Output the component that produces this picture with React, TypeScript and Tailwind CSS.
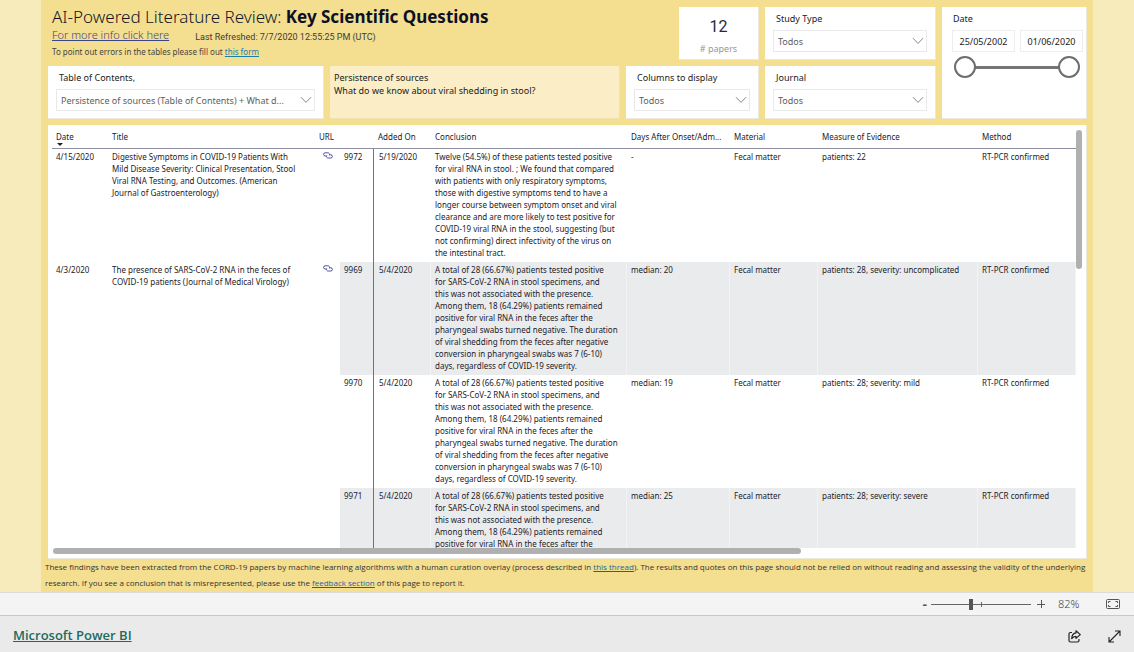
import type { ReactNode } from 'react';
import clsx from 'clsx';

interface Finding {
  id: string;
  added: string;
  conclusion: string[];
  days: string;
  evidence: string;
}

interface Paper {
  date: string;
  title: string[];
  findings: Finding[];
}

const FECES_CONCLUSION = [
  'A total of 28 (66.67%) patients tested positive',
  'for SARS-CoV-2 RNA in stool specimens, and',
  'this was not associated with the presence.',
  'Among them, 18 (64.29%) patients remained',
  'positive for viral RNA in the feces after the',
  'pharyngeal swabs turned negative. The duration',
  'of viral shedding from the feces after negative',
  'conversion in pharyngeal swabs was 7 (6-10)',
  'days, regardless of COVID-19 severity.',
];

const papers: Paper[] = [
  {
    date: '4/15/2020',
    title: [
      'Digestive Symptoms in COVID-19 Patients With',
      'Mild Disease Severity: Clinical Presentation, Stool',
      'Viral RNA Testing, and Outcomes. (American',
      'Journal of Gastroenterology)',
    ],
    findings: [
      {
        id: '9972',
        added: '5/19/2020',
        conclusion: [
          'Twelve (54.5%) of these patients tested positive',
          'for viral RNA in stool. ; We found that compared',
          'with patients with only respiratory symptoms,',
          'those with digestive symptoms tend to have a',
          'longer course between symptom onset and viral',
          'clearance and are more likely to test positive for',
          'COVID-19 viral RNA in the stool, suggesting (but',
          'not confirming) direct infectivity of the virus on',
          'the intestinal tract.',
        ],
        days: '-',
        evidence: 'patients: 22',
      },
    ],
  },
  {
    date: '4/3/2020',
    title: ['The presence of SARS-CoV-2 RNA in the feces of', 'COVID-19 patients (Journal of Medical Virology)'],
    findings: [
      { id: '9969', added: '5/4/2020', conclusion: FECES_CONCLUSION, days: 'median: 20', evidence: 'patients: 28, severity: uncomplicated' },
      { id: '9970', added: '5/4/2020', conclusion: FECES_CONCLUSION, days: 'median: 19', evidence: 'patients: 28; severity: mild' },
      { id: '9971', added: '5/4/2020', conclusion: FECES_CONCLUSION, days: 'median: 25', evidence: 'patients: 28; severity: severe' },
    ],
  },
];

function Card({ className, children }: { className?: string; children: ReactNode }) {
  return <section className={clsx('border-r border-b border-[#ece8da] bg-white', className)}>{children}</section>;
}

function Slicer({ id, label, value, className }: { id: string; label: string; value: string; className?: string }) {
  return (
    <Card className={clsx('px-2', className)}>
      <label htmlFor={id} className="block h-[23px] pt-1 pl-[3px] text-[9px] leading-4 text-[#222]">
        {label}
      </label>
      <div className="grid items-center">
        <select
          id={id}
          defaultValue={value}
          className="col-start-1 row-start-1 h-[22px] w-full appearance-none rounded-none border border-[#e9e9e9] bg-white pt-0.5 pr-5 pl-1 text-[9px] text-[#605e5c] outline-none"
        >
          <option>{value}</option>
        </select>
        <svg viewBox="0 0 12 8" className="pointer-events-none col-start-1 row-start-1 mr-[3px] h-2 w-3 justify-self-end" fill="none" stroke="#888" strokeWidth="1">
          <path d="M1 1.2 6 6.4l5-5.2" />
        </svg>
      </div>
    </Card>
  );
}

const thumbClasses =
  'pointer-events-none col-start-1 row-start-1 m-0 h-[22px] w-full appearance-none bg-transparent outline-none [&::-webkit-slider-thumb]:pointer-events-auto [&::-webkit-slider-thumb]:h-[22px] [&::-webkit-slider-thumb]:w-[22px] [&::-webkit-slider-thumb]:appearance-none [&::-webkit-slider-thumb]:rounded-full [&::-webkit-slider-thumb]:border-2 [&::-webkit-slider-thumb]:border-[#6e6e6e] [&::-webkit-slider-thumb]:bg-white';

function DateRange() {
  return (
    <Card className="row-span-2 pr-1 pl-2.5">
      <h2 className="h-[23px] pt-1 pl-px text-[9px] leading-4 text-[#222]">Date</h2>
      <div className="flex gap-[5px]">
        <input aria-label="Start date" defaultValue="25/05/2002" className="h-[22px] w-[63px] border border-[#eee] text-center text-[9px] text-[#222] outline-none" />
        <input aria-label="End date" defaultValue="01/06/2020" className="h-[22px] w-[63px] border border-[#eee] text-center text-[9px] text-[#222] outline-none" />
      </div>
      <div className="mt-1 ml-0.5 grid w-[126px] items-center">
        <div className="col-start-1 row-start-1 mx-2 h-[3px] bg-[#757575]" />
        <input type="range" aria-label="From" min={0} max={100} defaultValue={0} className={thumbClasses} />
        <input type="range" aria-label="To" min={0} max={100} defaultValue={100} className={thumbClasses} />
      </div>
    </Card>
  );
}

function Header() {
  return (
    <header className="col-span-2 pl-1">
      <h1 className="text-[17px] leading-5 font-light whitespace-nowrap text-[#101828]">
        AI-Powered Literature Review: <span className="font-bold text-[#0b1026]">Key Scientific Questions</span>
      </h1>
      <div className="flex items-center gap-[26px]">
        <a href="#info" className="text-[11px] leading-4 font-light text-[#3d4585] underline">
          For more info click here
        </a>
        <span className="pt-1 font-[Roboto] text-[9px] leading-3 text-[#3c3c3c]">Last Refreshed: 7/7/2020 12:55:25 PM (UTC)</span>
      </div>
      <p className="text-[8px] leading-[17px] text-[#444]">
        To point out errors in the tables please fill out{' '}
        <a href="#form" className="text-[#1a80a8] underline">
          this form
        </a>
      </p>
    </header>
  );
}

function LinkIcon() {
  return (
    <svg viewBox="0 0 10 7" className="h-[7px] w-2.5" fill="none" stroke="#4a5298" strokeWidth="1">
      <path d="M3.800 4H2.200a1.600 1.600 0 0 1 0-3.200h2.600a1.600 1.600 0 0 1 1.500 2.400" />
      <path d="M6 2.800h1.800a1.600 1.600 0 0 1 0 3.200H5.200a1.600 1.600 0 0 1-1.500-2.400" />
    </svg>
  );
}

function FindingsTable() {
  const rule = 'border-b border-b-[#8f8fa3]';
  let row = 0;
  return (
    <table className="w-full table-fixed border-separate border-spacing-0 text-left text-[8px] leading-3 text-[#1b1b2b]">
      <colgroup>
        <col className="w-14" />
        <col className="w-[207px]" />
        <col className="w-[25px]" />
        <col className="w-[34px]" />
        <col className="w-[57px]" />
        <col className="w-[196px]" />
        <col className="w-[103px]" />
        <col className="w-[88px]" />
        <col className="w-[160px]" />
        <col />
      </colgroup>
      <thead>
        <tr className="h-[19px] align-top whitespace-nowrap [&>th]:px-1 [&>th]:pt-px [&>th]:font-normal">
          <th className={rule}>
            Date
            <svg viewBox="0 0 6 3" className="ml-px h-[3px] w-1.5" fill="#222">
              <path d="M0 0h6L3 3z" />
            </svg>
          </th>
          <th className={rule}>Title</th>
          <th className={rule}>URL</th>
          <th className={rule}></th>
          <th className={rule}>Added On</th>
          <th className={rule}>Conclusion</th>
          <th className={rule}>Days After Onset/Adm...</th>
          <th className={rule}>Material</th>
          <th className={rule}>Measure of Evidence</th>
          <th className={rule}>Method</th>
        </tr>
      </thead>
      <tbody>
        {papers.map((paper) =>
          paper.findings.map((f, i) => {
            const band = row++ % 2 === 1 ? 'bg-[#eaebed] border-r border-r-[#f2f3f4]' : 'border-r border-r-transparent';
            return (
              <tr key={f.id} className="align-top whitespace-nowrap [&>td]:px-1 [&>td]:pt-0.5 [&>td]:pb-[3px]">
                {i === 0 && (
                  <>
                    <td rowSpan={paper.findings.length}>{paper.date}</td>
                    <td rowSpan={paper.findings.length} className="whitespace-pre-line">
                      {paper.title.join('\n')}
                    </td>
                    <td rowSpan={paper.findings.length}>
                      <a href={`#${f.id}`} aria-label="Open paper" className="flex justify-center pt-px">
                        <LinkIcon />
                      </a>
                    </td>
                  </>
                )}
                <td className={clsx(band, 'border-r-[#6f7080]!')}>{f.id}</td>
                <td className={clsx(band, 'pl-[5px]!')}>{f.added}</td>
                <td className={clsx(band, 'whitespace-pre')}>{f.conclusion.join('\n')}</td>
                <td className={band}>{f.days}</td>
                <td className={band}>Fecal matter</td>
                <td className={band}>{f.evidence}</td>
                <td className={band}>RT-PCR confirmed</td>
              </tr>
            );
          }),
        )}
      </tbody>
    </table>
  );
}

function ZoomBar() {
  return (
    <div className="flex h-[23px] items-center justify-end border-t border-[#dcdcdc] bg-[#f4f4f4] pr-3.5 text-[#555]">
      <button aria-label="Zoom out" className="mr-1 text-sm leading-4 font-semibold">
        -
      </button>
      <div className="grid w-[100px] items-center">
        <div className="col-start-1 row-start-1 h-px bg-[#666]" />
        <div className="col-start-1 row-start-1 ml-[50px] h-[5px] w-px bg-[#666]" />
        <input
          type="range"
          aria-label="Zoom"
          min={0}
          max={100}
          defaultValue={40}
          className="col-start-1 row-start-1 m-0 h-3 w-full appearance-none bg-transparent outline-none [&::-webkit-slider-thumb]:h-[11px] [&::-webkit-slider-thumb]:w-1 [&::-webkit-slider-thumb]:appearance-none [&::-webkit-slider-thumb]:bg-[#555]"
        />
      </div>
      <button aria-label="Zoom in" className="ml-1.5">
        <svg viewBox="0 0 8 8" className="h-2 w-2" stroke="#555" strokeWidth="1">
          <path d="M0 4.5h8M4.5 0v8" />
        </svg>
      </button>
      <span className="ml-[13px] w-6 text-[11px] leading-4 font-light text-[#444]">82%</span>
      <button aria-label="Fit to page" className="ml-6">
        <svg viewBox="0 0 14 10" className="h-2.5 w-3.5" fill="none" stroke="#555" strokeWidth="1">
          <rect x=".5" y=".5" width="13" height="9" rx="1" />
          <path d="M4.500 2.500h-2V4M2.500 6v1.500h2M9.500 2.500h2V4M11.500 6v1.500h-2" />
        </svg>
      </button>
    </div>
  );
}

export default function App() {
  return (
    <div className="flex h-screen flex-col overflow-hidden font-['Noto_Sans','Open_Sans',sans-serif]">
      <main className="flex min-h-0 flex-1 flex-col bg-[#f7ebbb] px-[41px]">
        <div className="flex min-h-0 flex-1 flex-col bg-[#f4de8f] pt-[7px] pr-1.5 pl-[7px]">
          <div className="grid grid-cols-[276px_1fr_133px_171px_145px] grid-rows-[53px_53px] gap-1.5">
            <Header />
            <Card className="flex w-20 flex-col items-center justify-self-end pt-2">
              <span className="font-[Roboto] text-base leading-6 text-[#252a48]">12</span>
              <span className="pt-0.5 text-[9px] leading-4 text-[#999]"># papers</span>
            </Card>
            <Slicer id="study" label="Study Type" value="Todos" />
            <DateRange />
            <Slicer id="contents" label="Table of Contents," value="Persistence of sources (Table of Contents) + What d..." />
            <div className="border-r border-b border-[#f1e3b0] bg-[#fbeec7] px-1 pt-[5px] text-[9px] leading-[13px] text-[#222]">
              <p>Persistence of sources</p>
              <p>What do we know about viral shedding in stool?</p>
            </div>
            <Slicer id="columns" label="Columns to display" value="Todos" />
            <Slicer id="journal" label="Journal" value="Todos" />
          </div>

          <Card className="mt-1.5 grid min-h-0 flex-1 grid-cols-[1fr_6px] grid-rows-[1fr_6px] pt-[5px] pr-1 pb-1 pl-1">
            <div className="min-h-0 overflow-hidden">
              <FindingsTable />
            </div>
            <div className="h-1/3 rounded-full bg-[#b0b0b0]" />
            <div className="ml-px w-[73%] rounded-full bg-[#b0b0b0]" />
          </Card>

          <div className="-ml-[3px] pb-px font-['Open_Sans'] text-[8px] leading-4 whitespace-nowrap text-[#333]">
            <p>
              These findings have been extracted from the CORD-19 papers by machine learning algorithms with a human curation overlay (process described in{' '}
              <a href="#thread" className="text-[#1a62a8] underline">
                this thread
              </a>
              ). The results and quotes on this page should not be relied on without reading and assessing the validity of the underlying
            </p>
            <p>
              research. If you see a conclusion that is misrepresented, please use the{' '}
              <a href="#feedback" className="text-[#1a62a8] underline">
                feedback section
              </a>{' '}
              of this page to report it.
            </p>
          </div>
        </div>
      </main>

      <ZoomBar />

      <footer className="flex h-[37px] items-center justify-between border-t border-[#c8c8c8] bg-[#eaeaea] pt-1 pr-[13px] pl-[13px]">
        <a href="#powerbi" className="font-['Open_Sans'] text-[13px] font-semibold text-[#1c6b5f] underline">
          Microsoft Power BI
        </a>
        <div className="flex items-center gap-[27px]">
          <button aria-label="Share">
            <svg viewBox="0 0 13 13" className="h-[13px] w-[13px]" fill="none" stroke="#222" strokeWidth="1.2" strokeLinejoin="round">
              <path d="M4 2.500H2.500A1.500 1.500 0 0 0 1 4v6.500A1.500 1.500 0 0 0 2.500 12h7A1.500 1.500 0 0 0 11 10.500V9" />
              <path d="M8 .8 12.300 4.600 8 8.400V6.300C6 6.300 4.700 7 3.700 8.600 3.900 5.200 5.500 3.100 8 2.900z" />
            </svg>
          </button>
          <button aria-label="Full screen">
            <svg viewBox="0 0 13 13" className="h-[13px] w-[13px]" fill="none" stroke="#222" strokeWidth="1.1">
              <path d="M1 12 12 1M7 1h5v5M1 7v5h5" />
            </svg>
          </button>
        </div>
      </footer>
    </div>
  );
}
